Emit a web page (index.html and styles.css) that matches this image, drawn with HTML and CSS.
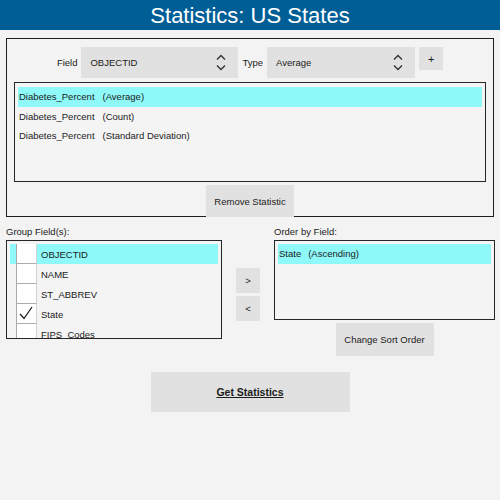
FILE: index.html
```html
<!DOCTYPE html>
<html>
<head>
<meta charset="utf-8">
<title>Statistics: US States</title>
<link rel="stylesheet" href="styles.css">
</head>
<body>
<header class="title-bar">Statistics: US States</header>
<main class="content">
  <section class="stat-panel">
    <div class="field-row">
      <span class="lbl">Field</span>
      <div class="select sel-field">
        <span>OBJECTID</span>
        <svg class="updown" width="10" height="17" viewBox="0 0 10 17"><polyline points="1,5.5 5,1.5 9,5.5"/><polyline points="1,11.5 5,15.5 9,11.5"/></svg>
      </div>
      <span class="lbl">Type</span>
      <div class="select sel-type">
        <span>Average</span>
        <svg class="updown" width="10" height="17" viewBox="0 0 10 17"><polyline points="1,5.5 5,1.5 9,5.5"/><polyline points="1,11.5 5,15.5 9,11.5"/></svg>
      </div>
      <button class="btn btn-plus">+</button>
    </div>
    <div class="list stat-list">
      <div class="row selected"><span class="stat-name">Diabetes_Percent</span><span>(Average)</span></div>
      <div class="row"><span class="stat-name">Diabetes_Percent</span><span>(Count)</span></div>
      <div class="row"><span class="stat-name">Diabetes_Percent</span><span>(Standard Deviation)</span></div>
    </div>
    <button class="btn btn-remove">Remove Statistic</button>
  </section>

  <section class="lower">
    <div class="col">
      <div class="col-label">Group Field(s):</div>
      <div class="list group-list">
        <div class="grow selected"><span class="check"></span><span>OBJECTID</span></div>
        <div class="grow"><span class="check"></span><span>NAME</span></div>
        <div class="grow"><span class="check"></span><span>ST_ABBREV</span></div>
        <div class="grow"><span class="check"><svg width="19" height="19" viewBox="0 0 19 19"><polyline points="3,10 7,14.5 15,3"/></svg></span><span>State</span></div>
        <div class="grow"><span class="check"></span><span>FIPS_Codes</span></div>
      </div>
    </div>
    <div class="col col-move">
      <button class="btn btn-move">&gt;</button>
      <button class="btn btn-move">&lt;</button>
    </div>
    <div class="col">
      <div class="col-label">Order by Field:</div>
      <div class="list order-list">
        <div class="row selected"><span class="order-name">State</span><span>(Ascending)</span></div>
      </div>
      <button class="btn btn-sort">Change Sort Order</button>
    </div>
  </section>

  <div class="get-wrap">
    <button class="btn btn-get">Get Statistics</button>
  </div>
</main>
</body>
</html>
```

FILE: styles.css
```css
html, body {
  margin: 0;
  padding: 0;
}
body {
  background: #f3f3f3;
  font-family: "Liberation Sans", Arial, sans-serif;
  font-size: 9.5px;
  color: #1b1b1b;
}
.title-bar {
  height: 30px;
  background: #005e96;
  color: #ffffff;
  text-align: center;
  font-size: 22px;
  line-height: 31px;
}
.content {
  padding: 8px 6px 0;
}
.stat-panel {
  border: 1px solid #1e1e1e;
  padding: 8px 7px 0;
  display: flex;
  flex-direction: column;
}
.field-row {
  display: flex;
  justify-content: center;
  align-items: flex-start;
  gap: 4px;
  height: 31px;
}
.lbl {
  line-height: 31px;
}
.select {
  box-sizing: border-box;
  height: 31px;
  background: #e1e1e1;
  display: flex;
  align-items: center;
  justify-content: space-between;
  padding: 0 12px 0 9px;
}
.sel-field { width: 157px; }
.sel-type { width: 148px; }
.updown polyline {
  fill: none;
  stroke: #333;
  stroke-width: 1.4;
}
.btn {
  border: none;
  background: #e1e1e1;
  font-family: inherit;
  font-size: 9.5px;
  color: #1b1b1b;
  padding: 0;
  margin: 0;
}
.btn-plus {
  width: 24px;
  height: 23px;
  font-size: 11px;
}
.list {
  box-sizing: border-box;
  border: 1px solid #262626;
  background: #f4f4f4;
  overflow: hidden;
}
.stat-list {
  margin-top: 4px;
  height: 100px;
  padding: 4px 3px;
}
.row {
  height: 19.5px;
  line-height: 19.5px;
  padding-left: 1px;
  white-space: nowrap;
}
.selected {
  background: #8ff8f8;
}
.stat-name {
  margin-right: 8px;
}
.btn-remove {
  align-self: center;
  width: 88px;
  height: 32px;
  margin-top: 3px;
  margin-bottom: -1px;
}
.lower {
  margin-top: 3px;
  display: grid;
  grid-template-columns: 216px 24px 221px;
  column-gap: 14px;
  align-items: start;
}
.col {
  display: flex;
  flex-direction: column;
}
.col-label {
  height: 20px;
  box-sizing: border-box;
  padding-top: 4px;
  line-height: 16px;
}
.group-list {
  height: 99px;
  padding: 3px;
}
.grow {
  height: 20px;
  display: flex;
  align-items: center;
  white-space: nowrap;
}
.check {
  box-sizing: border-box;
  width: 21px;
  height: 20px;
  margin-left: 6px;
  margin-right: 4px;
  background: #ffffff;
  border-left: 1px solid #a9a9a9;
  border-right: 1px solid #d2d2d2;
  border-bottom: 1px solid #acacac;
  flex: none;
}
.check svg {
  display: block;
}
.check polyline {
  fill: none;
  stroke: #1e1e1e;
  stroke-width: 1.3;
}
.col-move {
  padding-top: 48px;
  gap: 3px;
}
.btn-move {
  width: 24px;
  height: 25px;
}
.order-list {
  height: 80px;
  padding: 3px;
}
.order-name {
  margin-right: 7px;
}
.btn-sort {
  align-self: center;
  width: 98px;
  height: 33px;
  margin-top: 3px;
}
.get-wrap {
  display: flex;
  justify-content: center;
  margin-top: 16px;
}
.btn-get {
  width: 199px;
  height: 40px;
  font-weight: bold;
  font-size: 10.5px;
  text-decoration: underline;
}
```
